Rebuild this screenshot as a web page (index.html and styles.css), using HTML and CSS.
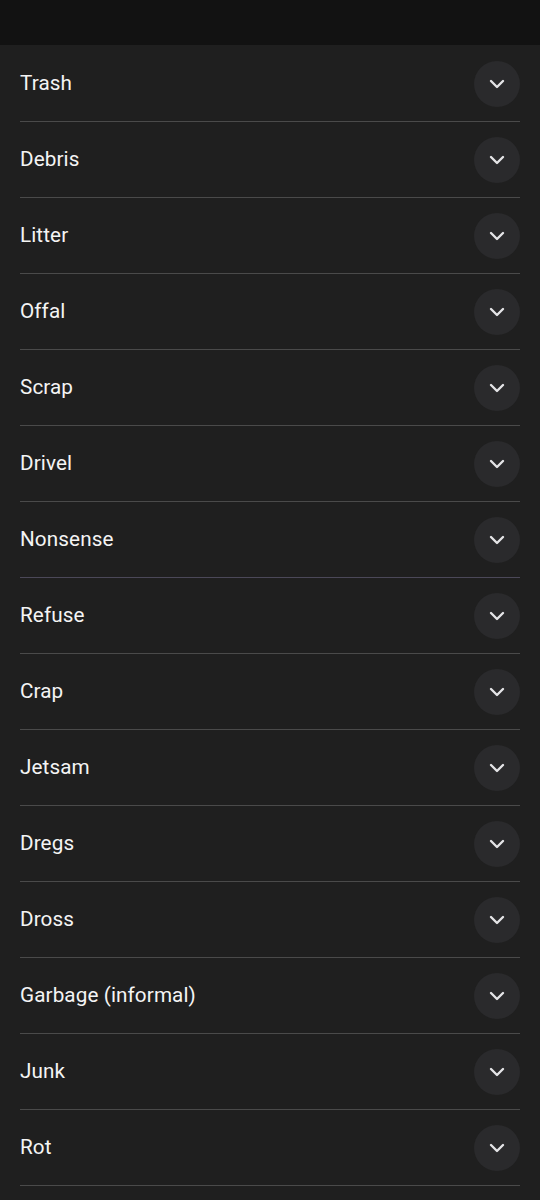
FILE: index.html
```html
<!DOCTYPE html>
<html lang="en">
<head>
    <meta charset="UTF-8">
    <meta name="viewport" content="width=device-width, initial-scale=1.0">
    <title>Synonyms</title>
    <link rel="stylesheet" href="styles.css">
</head>
<body>

<!-- top bar -->
<div class="topbar"></div>

<!-- word list -->
<ul class="word-list">
    <li class="word-row"><span class="word">Trash</span><button class="expand"><svg viewBox="0 0 16 10" width="16" height="10"><path d="M2 2l6 6 6-6"/></svg></button></li>
    <li class="word-row"><span class="word">Debris</span><button class="expand"><svg viewBox="0 0 16 10" width="16" height="10"><path d="M2 2l6 6 6-6"/></svg></button></li>
    <li class="word-row"><span class="word">Litter</span><button class="expand"><svg viewBox="0 0 16 10" width="16" height="10"><path d="M2 2l6 6 6-6"/></svg></button></li>
    <li class="word-row"><span class="word">Offal</span><button class="expand"><svg viewBox="0 0 16 10" width="16" height="10"><path d="M2 2l6 6 6-6"/></svg></button></li>
    <li class="word-row"><span class="word">Scrap</span><button class="expand"><svg viewBox="0 0 16 10" width="16" height="10"><path d="M2 2l6 6 6-6"/></svg></button></li>
    <li class="word-row"><span class="word">Drivel</span><button class="expand"><svg viewBox="0 0 16 10" width="16" height="10"><path d="M2 2l6 6 6-6"/></svg></button></li>
    <li class="word-row"><span class="word">Nonsense</span><button class="expand"><svg viewBox="0 0 16 10" width="16" height="10"><path d="M2 2l6 6 6-6"/></svg></button></li>
    <li class="word-row"><span class="word">Refuse</span><button class="expand"><svg viewBox="0 0 16 10" width="16" height="10"><path d="M2 2l6 6 6-6"/></svg></button></li>
    <li class="word-row"><span class="word">Crap</span><button class="expand"><svg viewBox="0 0 16 10" width="16" height="10"><path d="M2 2l6 6 6-6"/></svg></button></li>
    <li class="word-row"><span class="word">Jetsam</span><button class="expand"><svg viewBox="0 0 16 10" width="16" height="10"><path d="M2 2l6 6 6-6"/></svg></button></li>
    <li class="word-row"><span class="word">Dregs</span><button class="expand"><svg viewBox="0 0 16 10" width="16" height="10"><path d="M2 2l6 6 6-6"/></svg></button></li>
    <li class="word-row"><span class="word">Dross</span><button class="expand"><svg viewBox="0 0 16 10" width="16" height="10"><path d="M2 2l6 6 6-6"/></svg></button></li>
    <li class="word-row"><span class="word">Garbage (informal)</span><button class="expand"><svg viewBox="0 0 16 10" width="16" height="10"><path d="M2 2l6 6 6-6"/></svg></button></li>
    <li class="word-row"><span class="word">Junk</span><button class="expand"><svg viewBox="0 0 16 10" width="16" height="10"><path d="M2 2l6 6 6-6"/></svg></button></li>
    <li class="word-row"><span class="word">Rot</span><button class="expand"><svg viewBox="0 0 16 10" width="16" height="10"><path d="M2 2l6 6 6-6"/></svg></button></li>
</ul>

</body>
</html>
```

FILE: styles.css
```css
body {
    margin: 0;
    background-color: #1f1f1f;
    font-family: Roboto, "Liberation Sans", sans-serif;
    color: #f4f4f4;
}
.topbar {
    height: 45px;
    background-color: #121212;
}
.word-list {
    list-style: none;
    margin: 0;
    padding: 1px 20px 0;
}
.word-row {
    display: flex;
    align-items: center;
    justify-content: space-between;
    height: 75px;
    border-bottom: 1px solid #4a4a4a;
}
.word-row:nth-child(7) {
    border-bottom-color: #4b4858;
}
.word {
    font-size: 20.7px;
    letter-spacing: 0.1px;
    margin-top: -2px;
}
.expand {
    width: 46px;
    height: 46px;
    border-radius: 50%;
    border: none;
    padding: 0;
    background-color: #2a2a2c;
    display: flex;
    align-items: center;
    justify-content: center;
    cursor: pointer;
}
.expand svg path {
    fill: none;
    stroke: #e4e4e6;
    stroke-width: 2.4;
    stroke-linecap: round;
    stroke-linejoin: round;
}
```
